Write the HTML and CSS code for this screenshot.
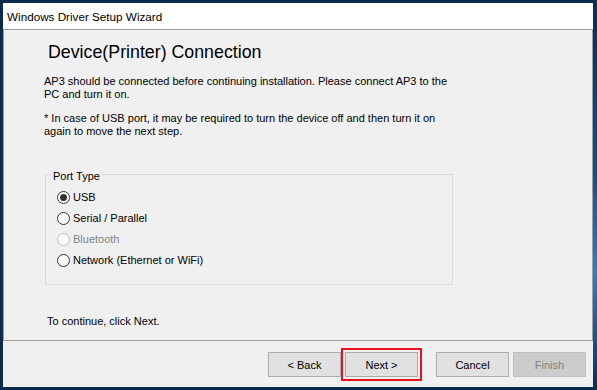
FILE: index.html
```html
<!DOCTYPE html>
<html lang="en">

<head>
    <meta charset="UTF-8">
    <title>Windows Driver Setup Wizard</title>
    <link rel="stylesheet" href="styles.css">
</head>

<body>
    <div class="window">
        <div class="titlebar">Windows Driver Setup Wizard</div>

        <div class="page">
            <h1 class="heading">Device(Printer) Connection</h1>
            <p class="note">AP3 should be connected before continuing installation. Please connect AP3 to the<br />PC and turn it on.</p>
            <p class="note note_second">* In case of USB port, it may be required to turn the device off and then turn it on<br />again to move the next step.</p>

            <fieldset class="group">
                <legend>Port Type</legend>
                <label class="option"><span class="radio radio_checked"></span>USB</label>
                <label class="option"><span class="radio"></span>Serial / Parallel</label>
                <label class="option option_disabled"><span class="radio"></span>Bluetooth</label>
                <label class="option"><span class="radio"></span>Network (Ethernet or WiFi)</label>
            </fieldset>

            <p class="hint">To continue, click Next.</p>
        </div>

        <div class="buttons">
            <button class="btn">&lt; Back</button>
            <button class="btn btn_next">Next &gt;</button>
            <button class="btn btn_cancel">Cancel</button>
            <button class="btn" disabled>Finish</button>
        </div>
    </div>
</body>

</html>
```

FILE: styles.css
```css
html, body {
    margin: 0;
    height: 390px;
    overflow: hidden;
}

body {
    width: 597px;
    font-family: "Liberation Sans", Arial, sans-serif;
    color: #000;
    background:
        linear-gradient(#0b2d52, #12508c 45%, #2a82c8 70%, #15497e 90%, #0c2b4e) right top / 5px 100% no-repeat,
        #0c2a4c;
}

.window {
    width: 590px;
    height: 384px;
    margin: 3px 0 0 3px;
    background: #f0f0f0;
    display: flex;
    flex-direction: column;
}

.titlebar {
    height: 26px;
    box-sizing: border-box;
    padding: 1px 0 0 4px;
    line-height: 25px;
    font-size: 11.7px;
    background: #fff;
}

.page {
    height: 312px;
    box-sizing: border-box;
    border: 1px solid #a0a0a0;
    padding: 12px 0 0 40px;
    font-size: 11px;
}

.heading {
    margin: 0 0 0 4px;
    font-size: 17.8px;
    font-weight: normal;
    line-height: 20px;
}

.note {
    margin: 13px 0 0;
    line-height: 13px;
}

.note_second {
    margin-top: 11px;
}

/* group box */
.group {
    width: 408px;
    box-sizing: border-box;
    margin: 32px 0 0 1px;
    padding: 8px 0 13px 11px;
    border: 1px solid #dcdcdc;
    min-inline-size: 0;
}

.group legend {
    height: 9px;
    line-height: 13px;
    margin-left: -6px;
    padding: 0 2px;
}

.option {
    display: flex;
    align-items: center;
    height: 21px;
    line-height: 13px;
}

.radio {
    width: 13px;
    height: 13px;
    box-sizing: border-box;
    border: 1px solid #333;
    border-radius: 50%;
    background: #fff;
    margin-right: 3px;
    display: flex;
    align-items: center;
    justify-content: center;
}

.radio_checked::after {
    content: "";
    width: 7px;
    height: 7px;
    border-radius: 50%;
    background: #333;
}

.option_disabled {
    color: #838383;
}

.option_disabled .radio {
    border-color: #bcbcbc;
}

.hint {
    margin: 30px 0 0 3px;
    line-height: 13px;
}

/* bottom buttons */
.buttons {
    flex: 1;
    display: flex;
    justify-content: flex-end;
    align-items: flex-start;
    padding: 11px 7px 0 0;
}

.btn {
    width: 73px;
    height: 25px;
    margin: 0 0 0 4px;
    padding: 0;
    font-family: "Liberation Sans", Arial, sans-serif;
    font-size: 11px;
    color: #000;
    background: #e1e1e1;
    border: 1px solid #adadad;
    border-radius: 0;
}

.btn_next {
    outline: 2px solid #e8111c;
    outline-offset: 2px;
}

.btn_cancel {
    margin-left: 18px;
}

.btn:disabled {
    color: #838383;
    background: #cccccc;
    border-color: #bfbfbf;
}
```
